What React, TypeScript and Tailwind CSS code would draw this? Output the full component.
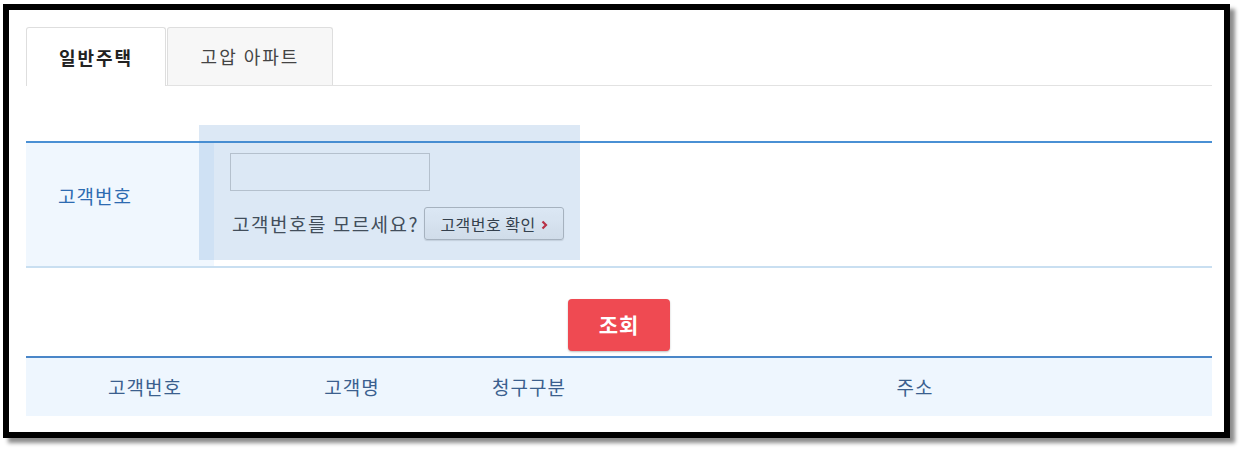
const FONT = "font-['Noto_Sans_CJK_KR','Noto_Sans',sans-serif]";

const COLUMNS = [
  { label: "고객번호", w: "w-[238px]" },
  { label: "고객명", w: "w-[176px]" },
  { label: "청구구분", w: "w-[178px]" },
  { label: "주소", w: "flex-1" },
];

export default function App() {
  return (
    <div className={`${FONT} bg-white w-[1243px] h-[451px] pt-[4px] pl-[3px]`}>
      <div className="w-[1227px] h-[434px] border-[6px] border-black bg-white shadow-[5px_5px_4px_rgba(0,0,0,0.45)]">
        <div className="relative pl-[17px] pr-[12px] pt-[17px]">
          {/* Tabs */}
          <div className="flex h-[59px] border-b border-[#e2e2e2]">
            <div className="w-[140px] h-[59px] -mb-px flex items-center justify-center rounded-t-[3px] border border-b-0 border-[#dedede] bg-white text-[18px] font-bold text-[#222] tracking-[2px]">
              일반주택
            </div>
            <div className="ml-px w-[166px] h-[58px] flex items-center justify-center rounded-t-[3px] border border-b-0 border-[#dedede] bg-[#f7f7f7] text-[18px] text-[#444] tracking-[2px]">
              고압 아파트
            </div>
          </div>

          {/* Customer number row */}
          <div className="mt-[55px] flex h-[127px] border-t-2 border-b-2 border-t-[#4a90d4] border-b-[#c9dff1]">
            <div className="w-[188px] bg-[#f0f7fe] pl-[32px] pt-[40px]">
              <span className="text-[19px] leading-[26px] tracking-[1px] text-[#2d6bb1]">고객번호</span>
            </div>
            <div className="pl-[16px] pt-[10px]">
              <div className="w-[200px] h-[38px] border border-[#cfcfcf] bg-white" />
              <div className="mt-[16px] flex items-center pl-[2px]">
                <span className="text-[19px] leading-[26px] text-[#444] tracking-[1.5px]">고객번호를 모르세요?</span>
                <button className="ml-[5px] h-[33px] w-[140px] flex items-center justify-center gap-[5px] rounded-[3px] border border-[#bdbdbd] bg-gradient-to-b from-white to-[#f1f1f1] shadow-[0_1px_1px_rgba(0,0,0,0.12)] text-[16px] tracking-[0.5px] text-[#333]">
                  고객번호 확인
                  <svg width="7" height="10" viewBox="0 0 7 10" className="mt-[2px]">
                    <path d="M1.5 1.5 L5 5 L1.5 8.5" fill="none" stroke="#d3212b" strokeWidth="2.2" />
                  </svg>
                </button>
              </div>
            </div>
          </div>

          {/* Search */}
          <div className="mt-[31px] flex justify-center">
            <button className="w-[102px] h-[52px] rounded-[4px] bg-[#ef4a52] shadow-[0_1px_2px_rgba(0,0,0,0.25)] text-[21px] font-bold tracking-[1px] text-white">
              조회
            </button>
          </div>

          {/* Result table header */}
          <div className="mt-[5px] flex h-[60px] border-t-2 border-[#4a86c8] bg-[#eef6fe]">
            {COLUMNS.map((c) => (
              <div key={c.label} className={`${c.w} flex items-center justify-center text-[19px] tracking-[1px] text-[#3b5f8e]`}>
                {c.label}
              </div>
            ))}
          </div>

          {/* highlight overlay from the capture */}
          <div className="absolute left-[190px] top-[115px] w-[381px] h-[135px] bg-[rgba(60,130,200,0.18)] pointer-events-none" />
        </div>
      </div>
    </div>
  );
}
